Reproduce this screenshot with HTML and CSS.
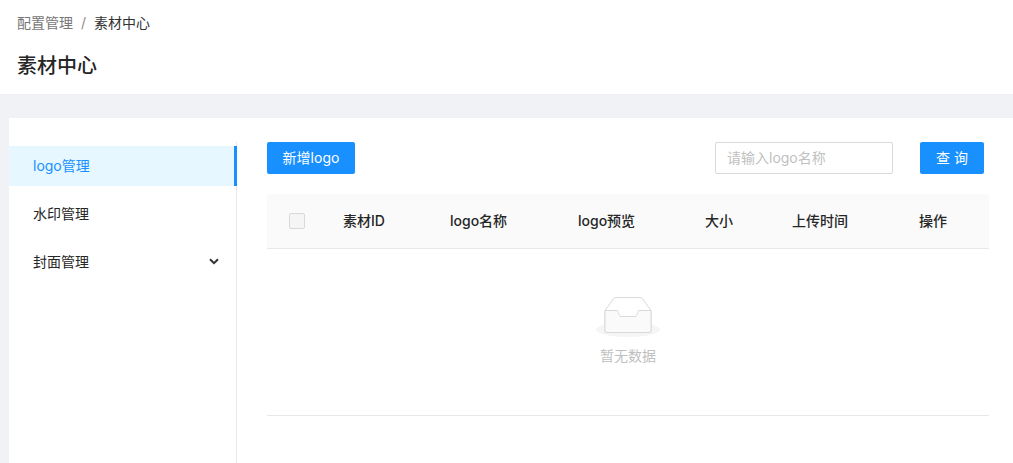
FILE: index.html
```html
<!DOCTYPE html>
<html lang="zh-CN">
<head>
<meta charset="utf-8">
<title>素材中心</title>
<link rel="stylesheet" href="styles.css">
</head>
<body>
<header class="page-header">
  <nav class="breadcrumb"><span class="crumb-link">配置管理</span><span class="crumb-sep">/</span><span class="crumb-current">素材中心</span></nav>
  <h1 class="page-title">素材中心</h1>
</header>
<main class="content">
  <div class="card">
    <aside class="side">
      <div class="menu-item active">logo管理</div>
      <div class="menu-item">水印管理</div>
      <div class="menu-item">封面管理
        <svg class="chev" width="10" height="7" viewBox="0 0 10 7"><path d="M1 1.2 5 5.2 9 1.2" fill="none" stroke="#333" stroke-width="2"/></svg>
      </div>
    </aside>
    <section class="panel">
      <div class="toolbar">
        <button class="btn btn-add">新增logo</button>
        <div class="search">
          <input class="input" placeholder="请输入logo名称">
          <button class="btn btn-query">查 询</button>
        </div>
      </div>
      <div class="thead">
        <div class="th"><span class="checkbox"></span></div>
        <div class="th">素材ID</div>
        <div class="th">logo名称</div>
        <div class="th">logo预览</div>
        <div class="th">大小</div>
        <div class="th">上传时间</div>
        <div class="th">操作</div>
      </div>
      <div class="empty">
        <svg class="empty-icon" width="64" height="41" viewBox="0 0 64 41">
          <ellipse cx="32" cy="33.500" rx="32" ry="7.500" fill="#f5f5f5"/>
          <path d="M9 14.500 18.500 1.500H45.500L55 14.500V34.500A2 2 0 0 1 53 36.500H11A2 2 0 0 1 9 34.500Z" fill="#fff" stroke="#d9d9d9"/>
          <path d="M9 14.500H21C23 14.500 22.500 20.500 25 20.500H39C41.500 20.500 41 14.500 43 14.500H55V34.500A2 2 0 0 1 53 36.500H11A2 2 0 0 1 9 34.500Z" fill="#fafafa" stroke="#d9d9d9"/>
        </svg>
        <p class="empty-text">暂无数据</p>
      </div>
    </section>
  </div>
</main>
</body>
</html>
```
FILE: styles.css
```css
* { box-sizing: border-box; }
html, body { height: 100%; }
body {
  margin: 0;
  height: 463px;
  overflow: hidden;
  display: flex;
  flex-direction: column;
  background: #f0f2f5;
  color: #262626;
  font-family: "Inter", "Noto Sans CJK SC", sans-serif;
  font-size: 14px;
}
.page-header { height: 94px; background: #fff; padding: 13px 17px 0; flex: none; }
.breadcrumb { display: flex; line-height: 20px; font-size: 14px; }
.crumb-link { color: #767676; }
.crumb-sep { color: #8c8c8c; margin: 0 8px; }
.crumb-current { color: #333; }
.page-title { margin: 19px 0 0; font-size: 20px; line-height: 28px; font-weight: 500; color: #262626; }
.content { flex: 1; padding: 24px 0 0 9px; min-height: 0; }
.card { display: flex; height: 100%; background: #fff; padding-top: 24px; }
.side { width: 228px; flex: none; padding-top: 4px; border-right: 1px solid #e8e8e8; }
.menu-item { position: relative; height: 40px; margin-bottom: 8px; padding-left: 24px; line-height: 40px; color: #262626; margin-right: -1px; }
.menu-item.active { background: #e6f7ff; color: #1890ff; border-right: 3px solid #1890ff; }
.chev { position: absolute; right: 18px; top: 16px; }
.panel { width: 722px; margin-left: 30px; }
.toolbar { display: flex; justify-content: space-between; align-items: center; padding-right: 5px; height: 32px; }
.search { display: flex; gap: 27px; }
.btn { height: 32px; border: 0; border-radius: 2px; background: #1890ff; color: #fff; font: inherit; padding: 0 0 2px; }
.btn-add { width: 88px; }
.btn-query { width: 64px; }
.input { width: 178px; height: 32px; border: 1px solid #d9d9d9; border-radius: 2px; padding: 0 11px 2px; font: inherit; outline: none; }
.input::placeholder { color: #bfbfbf; opacity: 1; }
.thead { display: grid; grid-template-columns: 60px 107px 128px 127px 87px 127px 86px; height: 55px; margin-top: 20px; background: #fafafa; border-bottom: 1px solid #e8e8e8; }
.th { display: flex; align-items: center; padding: 0 0 2px 16px; font-weight: 500; color: #262626; }
.th:first-child { padding: 0 0 0 22px; }
.checkbox { width: 16px; height: 16px; border: 1px solid #d9d9d9; border-radius: 2px; background: #f5f5f5; }
.empty { height: 167px; border-bottom: 1px solid #e8e8e8; display: flex; flex-direction: column; align-items: center; padding-top: 47px; }
.empty-icon { display: block; }
.empty-text { margin: 8px 0 0; line-height: 22px; color: #bfbfbf; }
```
